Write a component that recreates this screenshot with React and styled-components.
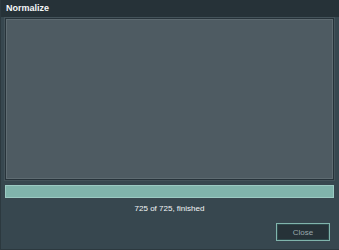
import React from "react";
import styled, { createGlobalStyle } from "styled-components";

const Global = createGlobalStyle`
  html, body { margin: 0; padding: 0; background: #37474f; }
  body { font-family: "Liberation Sans", Arial, sans-serif; }
  #root { width: 339px; height: 250px; }
`;

const Window = styled.div`
  width: 339px;
  height: 250px;
  box-sizing: border-box;
  display: flex;
  flex-direction: column;
  background: #37474f;
  border-left: 1px solid #2c393f;
  border-bottom: 1px solid #2c393f;
`;

const TitleBar = styled.div`
  height: 17px;
  flex: none;
  background: #263238;
  color: #f4f7f8;
  font-weight: bold;
  font-size: 9px;
  line-height: 17px;
  padding-left: 5px;
`;

const Body = styled.div`
  flex: 1;
  display: flex;
  flex-direction: column;
  padding: 1px 5px 8px 4px;
`;

const LogPanel = styled.div`
  height: 162px;
  box-sizing: border-box;
  background: #4e5b62;
  border: 1px solid #27333a;
  box-shadow: inset 1px 1px 0 #5f6c72, inset -1px -1px 0 #5f6c72;
  outline: 1px solid #44535a;
`;

const Progress = styled.div`
  margin-top: 5px;
  height: 13px;
  box-sizing: border-box;
  background: #2f3d43;
  border: 1px solid #9ccac3;
  display: flex;
`;

const Fill = styled.div`
  height: 100%;
  background: #80b4ac;
`;

const Status = styled.div`
  margin-top: 5px;
  text-align: center;
  color: #f2f5f6;
  font-size: 8px;
  line-height: 12px;
`;

const Footer = styled.div`
  margin-top: auto;
  display: flex;
  justify-content: flex-end;
  padding-right: 4px;
`;

const Button = styled.button`
  width: 54px;
  height: 18px;
  box-sizing: border-box;
  background: #263238;
  border: 1px solid #80b4ac;
  box-shadow: inset 0 0 0 1px #2f4a4c;
  color: #9aa9ad;
  font-family: "Liberation Sans", Arial, sans-serif;
  font-size: 8px;
  padding: 0;
  cursor: pointer;
`;

export default function App() {
  const done = 725;
  const total = 725;
  return (
    <>
      <Global />
      <Window>
        <TitleBar>Normalize</TitleBar>
        <Body>
          <LogPanel />
          <Progress>
            <Fill style={{ width: `${(done / total) * 100}%` }} />
          </Progress>
          <Status>
            {done} of {total}, finished
          </Status>
          <Footer>
            <Button>Close</Button>
          </Footer>
        </Body>
      </Window>
    </>
  );
}
